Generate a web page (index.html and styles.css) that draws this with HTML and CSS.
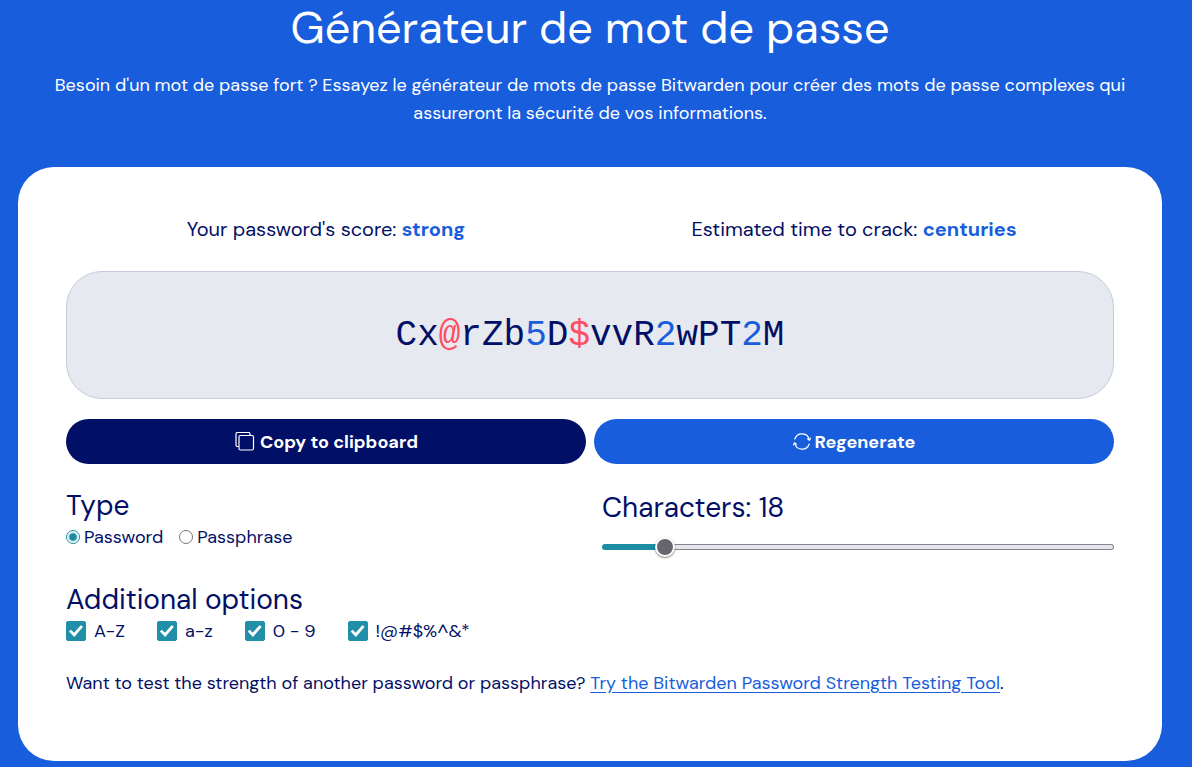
FILE: index.html
```html
<!DOCTYPE html>
<html lang="fr">
<head>
    <meta charset="UTF-8">
    <meta name="viewport" content="width=device-width, initial-scale=1.0">
    <title>Générateur de mot de passe</title>
    <link rel="stylesheet" href="styles.css">
</head>
<body>
    <header class="hero">
        <h1>Générateur de mot de passe</h1>
        <p>Besoin d'un mot de passe fort ? Essayez le générateur de mots de passe Bitwarden pour créer des mots de passe complexes qui assureront la sécurité de vos informations.</p>
    </header>

    <main class="card">
        <div class="scores">
            <div>Your password's score: <strong>strong</strong></div>
            <div>Estimated time to crack: <strong>centuries</strong></div>
        </div>

        <div class="password">Cx<span class="symbol">@</span>rZb<span class="digit">5</span>D<span class="symbol">$</span>vvR<span class="digit">2</span>wPT<span class="digit">2</span>M</div>

        <div class="actions">
            <button type="button" class="btn btn-dark">
                <svg width="22" height="22" viewBox="-1 1 22 22" fill="none" stroke="currentColor" stroke-width="1.2" aria-hidden="true">
                    <path d="M4 15.500H2.500A1.500 1.500 0 0 1 1 14V3A1.500 1.500 0 0 1 2.500 1.500H13.500A1.500 1.500 0 0 1 15 3V4"/>
                    <rect x="4" y="4.500" width="14.500" height="14.500" rx="1.500"/>
                </svg>
                Copy to clipboard
            </button>
            <button type="button" class="btn btn-blue">
                <svg width="18" height="20" viewBox="0 0 18 20" fill="none" stroke="currentColor" stroke-width="1.2" stroke-linecap="round" stroke-linejoin="round" aria-hidden="true">
                    <path d="M1.800 6A7.500 7.500 0 0 1 16.300 7M16.200 11A7.500 7.500 0 0 1 1.700 10"/>
                    <path d="M14.600 5.800L16.500 7.200L17.500 5.200M.5 11.800L1.500 9.800L3.400 11.200"/>
                </svg>
                Regenerate
            </button>
        </div>

        <div class="settings">
            <fieldset>
                <legend>Type</legend>
                <div class="radios">
                    <label><input type="radio" name="type" value="password" checked>Password</label>
                    <label><input type="radio" name="type" value="passphrase">Passphrase</label>
                </div>
            </fieldset>
            <div class="length">
                <label for="length">Characters: 18</label>
                <input type="range" id="length" min="5" max="128" value="18" style="--fill: 12%">
            </div>
        </div>

        <fieldset class="options">
            <legend>Additional options</legend>
            <div class="checks">
                <label><input type="checkbox" checked>A-Z</label>
                <label><input type="checkbox" checked>a-z</label>
                <label><input type="checkbox" checked>0 - 9</label>
                <label><input type="checkbox" checked>!@#$%^&amp;*</label>
            </div>
        </fieldset>

        <p class="more">Want to test the strength of another password or passphrase? <a href="#">Try the Bitwarden Password Strength Testing Tool</a>.</p>
    </main>
</body>
</html>
```

FILE: styles.css
```css
* {
    box-sizing: border-box;
}
body {
    margin: 0;
    padding: 0 30px 6px 18px;
    background-color: #175ddc;
    color: #020f66;
    font-family: "DM Sans", Inter, sans-serif;
    font-size: 18px;
    line-height: 28px;
}
.hero {
    padding-bottom: 40px;
    color: #fff;
    text-align: center;
}
h1 {
    margin: 0 0 15px;
    font-size: 45px;
    font-weight: 400;
    line-height: 56px;
}
p {
    margin: 0;
}
.hero p {
    padding: 0 24px;
}
.card {
    padding: 48px 48px 64px;
    border-radius: 36px;
    background-color: #fff;
}
.scores,
.actions {
    display: grid;
    grid-template-columns: 1fr 1fr;
    gap: 8px;
}
.scores {
    margin-bottom: 28px;
    font-size: 20px;
    text-align: center;
}
.scores strong {
    color: #175ddc;
}
.password {
    padding: 40px 24px 38px;
    border: 1px solid #c5cbdc;
    border-radius: 36px;
    background-color: #e6e9f0;
    font-family: "Liberation Mono", monospace;
    font-size: 36px;
    line-height: 48px;
    text-align: center;
    overflow-wrap: anywhere;
}
.digit {
    color: #175ddc;
}
.symbol {
    color: #ff4e63;
}
.actions {
    margin: 20px 0 24px;
}
.btn {
    display: flex;
    justify-content: center;
    align-items: center;
    gap: 4px;
    padding: 9px 16px 7px;
    border: none;
    border-radius: 24px;
    color: #fff;
    font: inherit;
    font-weight: 700;
    line-height: 29px;
    cursor: pointer;
}
.btn-dark {
    background-color: #020f66;
}
.btn-blue {
    background-color: #175ddc;
}

/* Settings */
.settings {
    display: grid;
    grid-template-columns: 1fr 1fr;
    gap: 24px;
}
fieldset {
    margin: 0;
    padding: 0;
    border: none;
    min-width: 0;
}
legend,
.length label {
    display: block;
    padding: 0;
    font-size: 28px;
    line-height: 35px;
}
.radios,
.checks {
    display: flex;
    flex-wrap: wrap;
}
.radios {
    gap: 16px;
}
.checks {
    gap: 32px;
}
.radios label,
.checks label {
    display: flex;
    align-items: center;
    gap: 4px;
}
.checks label {
    gap: 8px;
}
input {
    margin: 0;
    appearance: none;
}
input[type="radio"] {
    width: 14px;
    height: 14px;
    border: 1px solid #767680;
    border-radius: 50%;
}
input[type="radio"]:checked {
    border-color: #1c8ca3;
    background: radial-gradient(circle, #1c8ca3 3px, #fff 5px);
}
input[type="checkbox"] {
    width: 20px;
    height: 20px;
    border: 1px solid #767680;
    border-radius: 2px;
}
input[type="checkbox"]:checked {
    display: grid;
    place-items: center;
    border-color: #218fa8;
    background-color: #218fa8;
}
input[type="checkbox"]:checked::before {
    content: "";
    width: 14px;
    height: 12px;
    background-color: #fff;
    clip-path: polygon(0 54%, 14% 40%, 36% 64%, 84% 2%, 100% 14%, 38% 100%);
}
.length {
    padding-top: 2px;
}
input[type="range"] {
    display: block;
    width: 100%;
    height: 20px;
    margin-top: 12px;
    background: none;
}
input[type="range"]::-webkit-slider-runnable-track {
    height: 6px;
    border: 1px solid transparent;
    border-radius: 3px;
    background:
        linear-gradient(to right, #1c8ca3 var(--fill), #e6e6ec var(--fill)) padding-box,
        linear-gradient(to right, #1c8ca3 var(--fill), #85858f var(--fill)) border-box;
}
input[type="range"]::-webkit-slider-thumb {
    appearance: none;
    width: 20px;
    height: 20px;
    margin-top: -8px;
    border: 2px solid #fff;
    border-radius: 50%;
    background-color: #66666f;
    box-shadow: 0 1px 2px rgba(0, 0, 0, 0.5);
}
.options {
    margin-top: 25px;
}
.more {
    margin-top: 24px;
}
a {
    color: #175ddc;
    text-underline-offset: 3px;
}
```
